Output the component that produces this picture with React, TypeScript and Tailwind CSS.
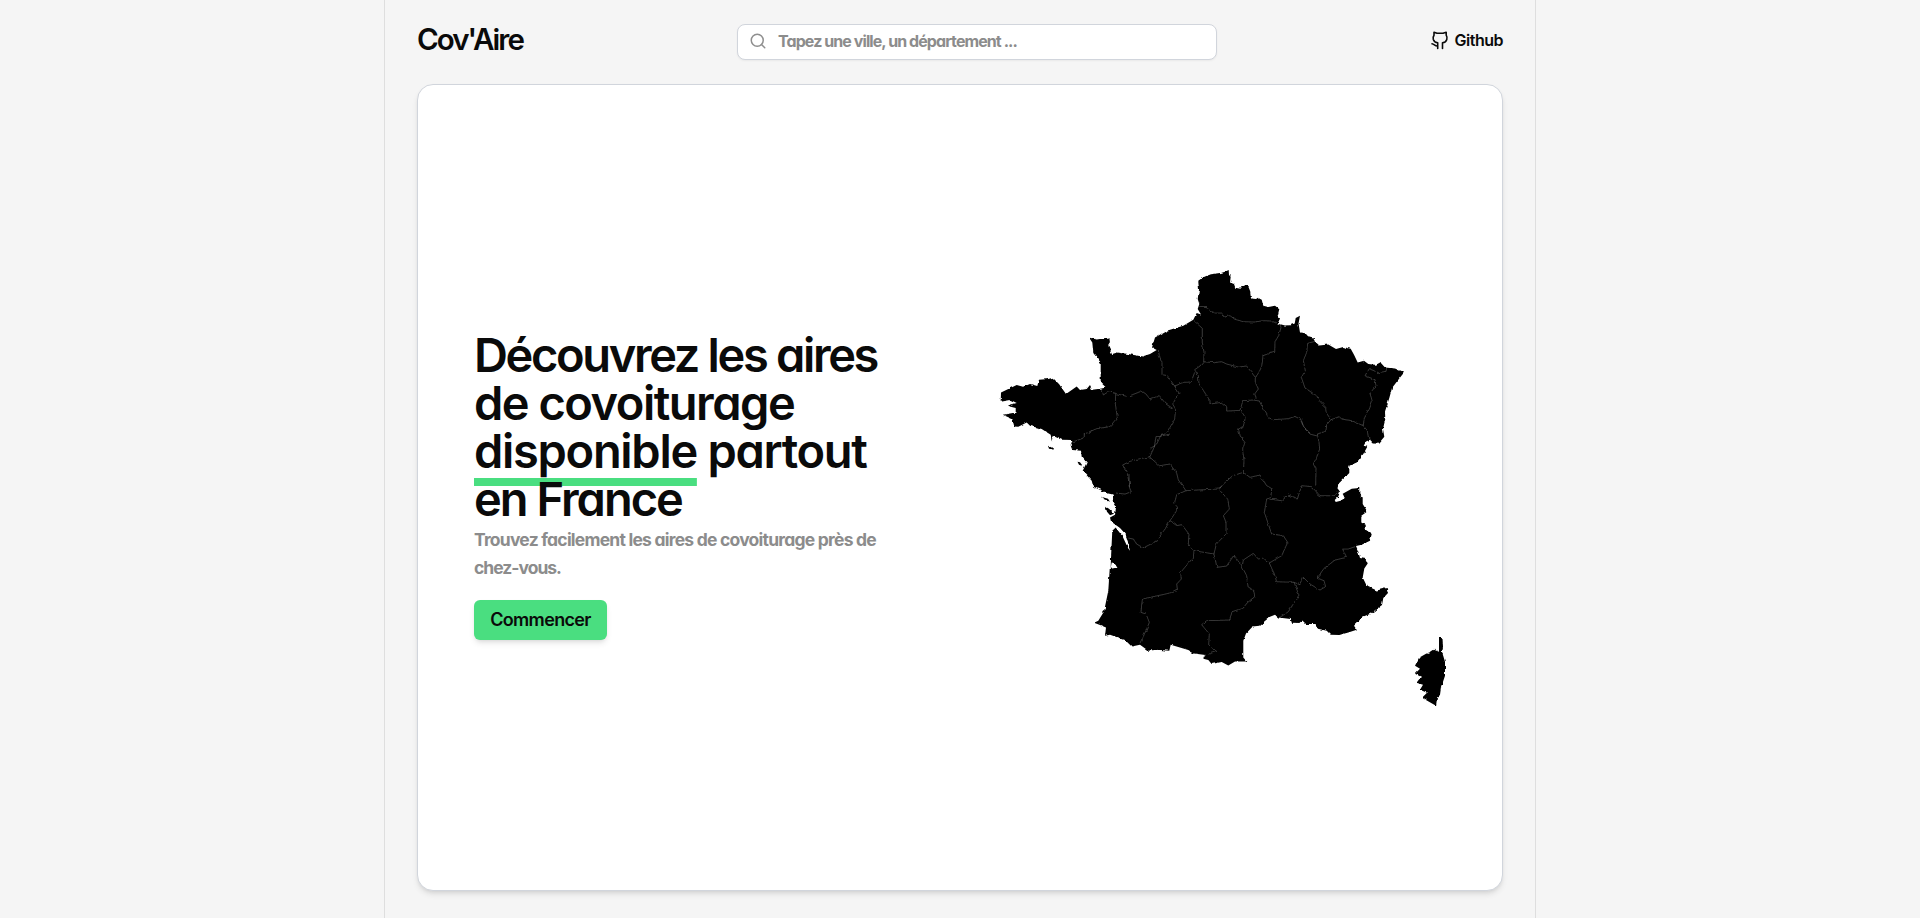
import React from "react";
import { Search } from "lucide-react";

const mainland =
  "M1198.3 280L1201 278L1205 275.7L1211 273.5L1217.3 272.7L1221 272.3L1225 271L1228.7 269.3L1229 274.3L1230.7 276L1230 281.7L1234 283.3L1235.3 287L1240.3 288L1242.3 285.3L1247.7 284.3L1250 290L1251 297.7L1256 298.3L1258 297L1261.7 299L1263.3 305L1268.3 306.3L1275 305L1279.3 308.3L1277.7 315L1280 317.7L1277.7 322.7L1285 324.7L1290 324.5L1294.7 322.7L1295.7 317.3L1300 315L1298.5 322.7L1300 331.7L1306.7 332.7L1309.3 336.7L1313.3 337.7L1315 340.7L1319.3 344.7L1328.3 343.7L1336 348.3L1343.3 346.3L1350.7 348L1354 354L1357.7 361.7L1364 360L1368.3 363.3L1375 364L1380 361.3L1385 366.7L1395 367.7L1404 371.7L1398.3 379L1392 387.3L1389.3 397.3L1385 410.7L1385.3 418.3L1383 428.3L1384.3 436L1379.3 442L1372.7 441.7L1370 439L1366 440.7L1363.7 445L1367.3 446L1363.3 453.3L1356.7 461.7L1349.3 465L1349.3 472.3L1338.3 483.3L1337.3 487.3L1340 491L1338.3 495.7L1334.7 499.3L1335.7 501.3L1340.7 500L1344.7 497.3L1342.7 493L1351.7 488L1359.3 487.3L1359.3 492.7L1362.7 496.7L1362.7 503.3L1367.3 510.7L1361.3 515L1361.3 521.7L1365.7 524L1365.7 529L1371.7 533.3L1370 540L1361.7 544L1356 545.3L1358 550L1360 557.3L1365.7 558.3L1367.7 562.7L1364.3 567.7L1362.7 576.7L1366.7 585L1376.7 589.7L1386.7 587.3L1388 592.3L1383.3 597.3L1382 604.3L1370 613.3L1363.3 615.7L1354 625L1356.7 629L1348.3 631.7L1339.3 634.3L1330.7 634L1326.7 630L1316.7 627.7L1315.7 623.3L1306 623.3L1302.3 619.7L1299.3 622.3L1291.7 622L1290.7 618.3L1278.3 616.7L1275 614L1270 616L1259.3 625L1252.7 625.7L1246 632.7L1243.3 640L1243.3 656.7L1246.7 660.7L1235 660.7L1228.3 664.7L1221.7 661.3L1211.7 663.3L1208.3 659.3L1203.3 658L1205.3 654.3L1194 652.7L1188.3 649.3L1170.7 644L1169.3 650L1156.7 649L1148.3 650L1140 644L1131.7 645.7L1125 639.3L1110 634L1105 635L1106 626.7L1100 624.3L1094 622L1098.3 620L1104 610.7L1108.3 590L1109.7 568.3L1117.3 566.7L1115 562.7L1111.7 561.7L1110.7 567L1111 556.7L1112.3 530L1115.7 526.7L1123.3 535L1126.7 543.3L1129.7 550L1128.3 543.3L1125.3 533.3L1119.3 526.7L1111 520.7L1110 516.7L1115 514L1116 506.7L1112.3 500.7L1114 494L1108.3 492.7L1093.3 486L1091.7 480L1082.7 470L1086.7 461.7L1081.7 456L1081 450L1072.3 449.3L1070.7 445L1072.3 439.3L1061.7 439L1052.7 435L1051.7 440.7L1050.7 434L1041.7 428.3L1030 425L1026.7 421.7L1018.3 426L1014.3 425.7L1012.3 418.3L1002.7 414L1010 412.7L1015.7 411.7L1015.7 407.3L1006.7 405L1016.7 402.3L1010.7 399.3L1000.7 401L1001 391.7L1008.3 388.3L1016.7 384.3L1023 386L1030 383.3L1037.3 385.3L1039 379L1048.3 378.3L1052.7 377L1059 383.3L1066 393.3L1076.7 385.7L1080 389.3L1086.7 388.3L1090 384.3L1092.3 389L1101.7 387.7L1106 386.7L1100.7 381.7L1100.7 361.7L1093.3 352.3L1092.3 341.7L1089 336.7L1096.7 338.7L1109.3 336.7L1110 342.3L1108.3 345L1112.3 353.3L1117.3 351.7L1128.3 353.3L1142.3 355.7L1150 353.3L1156.7 349.3L1152 346.7L1155 336.7L1166.7 330L1183.3 325L1193.3 319L1196.7 312.3L1201 313.7L1197.7 308.3L1199.3 303.3L1197.7 298.3L1199 289Z";

const islands =
  "M1048 445L1052 447L1054 449L1049 448ZM1077.5 461L1080 461.5L1083 465.5L1079 464ZM1101 496L1108 498L1110 501L1103 498ZM1105.5 506L1109 508L1114 513L1110 514.5L1107 511Z";

const channels = "M1115 525L1120 527.5L1125.5 533.5L1128 542L1129.7 550L1126 543L1122.5 535.5L1117 528.5ZM1112 562L1115.5 563L1117.5 566.5L1112 567Z";

const corsica =
  "M1439 637L1442.5 637.5L1443 646L1442 651L1445 661L1445 675L1441 687L1440 694L1437 698L1436 705L1429 701L1422 697L1427 692L1420 689L1423 684L1416.5 682L1421 676L1415 673L1420 668L1415 665L1419 657L1426 653L1431 651L1434 649L1439 651Z";

function FranceMap() {
  return (
    <svg viewBox="1000 269 446 437" className="h-[437px] w-[446px] shrink-0 overflow-visible" aria-hidden="true">
      <defs>
        <filter id="coast" filterUnits="userSpaceOnUse" x="990" y="260" width="466" height="456">
          <feTurbulence type="fractalNoise" baseFrequency="0.2" numOctaves="2" seed="4" />
          <feDisplacementMap in="SourceGraphic" scale="3" xChannelSelector="R" yChannelSelector="G" />
        </filter>
      </defs>
      <g filter="url(#coast)" transform="translate(-1 0.7)" strokeLinejoin="round">
        <path d={mainland} />
        <path d={islands} />
        <path d={corsica} />
        <path d={channels} fill="#fff" />
        <g fill="none" stroke="#707070" strokeWidth="1.5">
          <g transform="translate(1130 255) scale(.33333)">
            <path d="M208 152L228 153L240 165L255 172L275 172L282 184L300 180L315 191L340 198L375 199L400 195L425 196L450 207L453 215L446 240L435 258L434 290L412 295L399 300L395 332L387 350L376 365L350 331L325 334L290 325L275 318L250 321L221 318L210 331L194 342L205 360L207 384L225 412L240 435L240 445L275 440L290 452L290 466L330 464L339 435L370 433L378 425L374 415L385 400L376 380L376 365" />
            <path d="M192 195L217 218L217 260L222 290L221 318M85 283L88 300L96 320L96 357L112 360L133 390L147 412L128 445L137 460L134 490L120 515L105 535L92 540L80 565L60 580M133 390L160 380L183 379L194 350M128 458L108 445L88 420L60 430L48 415L35 406L0 420M370 433L388 436L400 460L416 486L430 492L475 489L495 482L513 492L520 515L540 532M333 465L346 485L340 512L325 520L332 545L345 560L338 580L342 615" />
          </g>
          <g transform="translate(1260 310) scale(.33333)">
            <path d="M165 92L143 98L140 125L130 150L136 180L124 200L135 232L170 255L178 270L197 290L198 305L213 327L238 318L245 325L275 330L310 345L312 325L328 295L337 272L330 248L348 225L345 207L315 195L328 174L355 186L378 182L380 173M310 345L322 360L325 380L333 387M213 327L200 342L197 362L172 370L177 395L179 415L170 440L160 460L168 475L167 525M172 376L150 370L133 352L125 332" />
          </g>
          <g transform="translate(980 320) scale(.33333)">
            <path d="M365 203L370 223L385 213L405 218L440 227M407 220L406 250L412 290L390 318L350 324L313 340L313 351L278 364M570 340L540 347L528 348L523 378L510 408L475 415L450 422L428 433L443 463L449 500" />
          </g>
          <g transform="translate(1060 440) scale(.33333)">
            <path d="M207 100L208 140L214 153L195 160L165 157M268 48L298 75L330 70L350 97L355 118L378 150L430 147L478 145L485 136M378 150L350 162L344 185L353 205L330 240L315 265L290 300L250 322L230 310L220 295L205 292M330 240L350 255L365 252L387 280L385 310L402 330L462 340L469 310L498 280L498 245L490 225L508 205L503 175L480 150M402 330L400 350L362 395L364 415L350 430L352 445L330 457L270 470L247 475L243 515L258 520L268 545L258 570L240 607M462 340L471 380L500 376L522 343M510 538L440 540L425 552L448 580L446 612L470 632L432 645" />
          </g>
          <g transform="translate(1220 460) scale(.33333)">
            <path d="M72 0L70 35L38 45L5 75L0 82M70 35L90 50L120 43L140 75L158 85L155 110L140 115L133 155L155 220L190 225L203 245L185 285L148 307L130 292L115 295L100 278L70 298L66 318L42 283M148 115L185 120L205 103L232 115L245 75L275 78L300 105L345 105L355 92M148 307L163 340L170 363L222 365L237 403L205 453L180 470M66 318L80 345L84 378L102 390L104 408L80 428L70 442L36 453L30 478L28 478M222 365L240 372L250 350L270 370L300 388L317 378L312 360L292 352L312 323L345 298L380 290L368 265L385 265L405 258" />
          </g>
        </g>
      </g>
    </svg>
  );
}

function GithubIcon() {
  return (
    <svg width="18" height="19" viewBox="0 0 18 19" fill="none" stroke="#0a0a0a" strokeWidth="1.6" strokeLinecap="round" strokeLinejoin="round">
      <path d="M3 1.2L6 2.3H12L15.2 1.2V4.2C16 5.6 16.3 7 15.8 8.4C15.2 10.4 13.5 11.5 11.5 11.7V17.5M3 1.2V4.2C2 5.6 1.9 7 2.3 8.4C3 10.4 4.5 11.5 6.7 11.7V17.5M6.7 15C4 15.4 3.4 13.2 1 12.8" />
    </svg>
  );
}

export default function App() {
  return (
    <div className="h-[918px] bg-[#f5f5f5] font-['Inter','Liberation_Sans',sans-serif] font-semibold text-[#0a0a0a] [font-feature-settings:'cv11']">
      <div className="mx-auto flex h-full w-[1152px] flex-col border-x border-[#dedede] px-8 pb-[27px]">
        <header className="flex h-[84px] shrink-0 items-center justify-between">
          <a className="w-[320px] pb-1.5 text-[29.5px] leading-9 tracking-[-1.95px]">Cov'Aire</a>
          <label className="flex h-9 w-[480px] items-center rounded-lg border border-gray-300 bg-white pl-[11px] shadow-xs">
            <Search size={18} strokeWidth={2} className="-mt-0.5 text-[#8f8f8f]" />
            <span className="ml-[11px] pb-0.5 text-[16px] font-bold tracking-[-0.92px] text-[#8c8c8c]">Tapez une ville, un département ...</span>
          </label>
          <a className="flex w-[286px] items-center justify-end gap-1.5 pb-1">
            <GithubIcon />
            <span className="text-[16px] leading-6 tracking-[-0.5px]">Github</span>
          </a>
        </header>
        <main className="flex flex-1 items-center justify-between rounded-2xl border border-gray-300 bg-white pr-[55px] pl-14 shadow-md">
          <div className="flex flex-col items-start pb-[5px]">
            <h1 className="mb-[3px] text-[47px] leading-[48px]">
              <span className="block whitespace-nowrap tracking-[-2.35px]">Découvrez les aires</span>
              <span className="block whitespace-nowrap tracking-[-1.5px]">de covoiturage</span>
              <span className="block whitespace-nowrap tracking-[-1.3px]">
                <span className="underline decoration-[#4ade80] decoration-8 underline-offset-[10px] [text-decoration-skip-ink:none]">disponible</span> partout
              </span>
              <span className="relative block whitespace-nowrap tracking-[-2px]">en France</span>
            </h1>
            <p className="text-[17.5px] leading-7 font-bold tracking-[-0.77px] text-[#8c8c8c]">
              <span className="block whitespace-nowrap">Trouvez facilement les aires de covoiturage près de</span>
              <span className="block tracking-[-1px]">chez-vous.</span>
            </p>
            <button className="mt-[18px] h-10 w-[133px] rounded-md bg-[#4ade80] text-[18px] tracking-[-0.65px] shadow-md">Commencer</button>
          </div>
          <FranceMap />
        </main>
      </div>
    </div>
  );
}
